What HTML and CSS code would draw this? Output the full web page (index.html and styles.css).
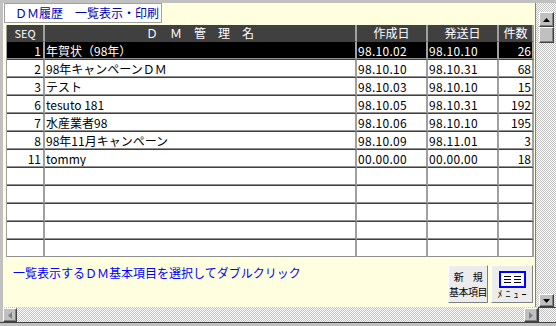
FILE: index.html
```html
<!DOCTYPE html>
<html lang="ja">
<head>
  <meta charset="UTF-8" />
  <title>DM履歴 一覧表示・印刷</title>
  <link rel="stylesheet" href="styles.css">
</head>

<body>
  <div class="ventana">
    <div class="arriba">
      <div class="principal">
        <div class="titulo">ＤＭ履歴　一覧表示・印刷</div>

        <table class="lista">
          <thead>
            <tr>
              <th class="seq">SEQ</th>
              <th class="nombre">Ｄ　Ｍ　管　理　名</th>
              <th class="fecha">作成日</th>
              <th class="fecha">発送日</th>
              <th class="num">件数</th>
            </tr>
          </thead>
          <tbody>
            <tr class="sel">
              <td class="seq">1</td><td>年賀状（98年）</td><td class="f">98.10.02</td><td class="f">98.10.10</td><td class="num">26</td>
            </tr>
            <tr>
              <td class="seq">2</td><td>98年キャンペーンＤＭ</td><td class="f">98.10.10</td><td class="f">98.10.31</td><td class="num">68</td>
            </tr>
            <tr>
              <td class="seq">3</td><td>テスト</td><td class="f">98.10.03</td><td class="f">98.10.10</td><td class="num">15</td>
            </tr>
            <tr>
              <td class="seq">6</td><td>tesuto 181</td><td class="f">98.10.05</td><td class="f">98.10.31</td><td class="num">192</td>
            </tr>
            <tr>
              <td class="seq">7</td><td>水産業者98</td><td class="f">98.10.06</td><td class="f">98.10.10</td><td class="num">195</td>
            </tr>
            <tr>
              <td class="seq">8</td><td>98年11月キャンペーン</td><td class="f">98.10.09</td><td class="f">98.11.01</td><td class="num">3</td>
            </tr>
            <tr>
              <td class="seq">11</td><td>tommy</td><td class="f">00.00.00</td><td class="f">00.00.00</td><td class="num">18</td>
            </tr>
            <!-- filas vacías -->
            <tr><td></td><td></td><td></td><td></td><td></td></tr>
            <tr><td></td><td></td><td></td><td></td><td></td></tr>
            <tr><td></td><td></td><td></td><td></td><td></td></tr>
            <tr><td></td><td></td><td></td><td></td><td></td></tr>
            <tr><td></td><td></td><td></td><td></td><td></td></tr>
          </tbody>
        </table>

        <div class="pie">
          <p class="aviso">一覧表示するＤＭ基本項目を選択してダブルクリック</p>
          <div class="botones">
            <button class="boton nuevo">新　規<br>基本項目</button>
            <button class="boton menu">
              <svg width="27" height="17" viewBox="0 0 27 17">
                <rect x="1" y="1" width="25" height="15" fill="#fff" stroke="#0000ff" stroke-width="2"/>
                <path d="M5 5.5h7M5 8.5h7M5 11.5h7M15 5.5h7M15 8.5h7M15 11.5h7" stroke="#000" stroke-width="1"/>
              </svg>
              <span>ﾒﾆｭｰ</span>
            </button>
          </div>
        </div>
      </div>

      <div class="vscroll">
        <div class="sbtn">
          <svg width="7" height="4" viewBox="0 0 7 4"><polygon points="3.5,0 7,4 0,4" fill="#000"/></svg>
        </div>
        <div class="sbtn thumb"></div>
        <div class="sbtn abajo">
          <svg width="7" height="4" viewBox="0 0 7 4"><polygon points="0,0 7,0 3.5,4" fill="#000"/></svg>
        </div>
      </div>
    </div>

    <div class="abajo-barra">
      <div class="hscroll">
        <div class="sbtn hbtn">
          <svg width="4" height="7" viewBox="0 0 4 7"><polygon points="4,0 4,7 0,3.5" fill="#808080"/></svg>
        </div>
        <div class="sbtn hbtn der">
          <svg width="4" height="7" viewBox="0 0 4 7"><polygon points="0,0 4,3.5 0,7" fill="#808080"/></svg>
        </div>
      </div>
      <div class="esquina"></div>
    </div>
  </div>
</body>
</html>
```

FILE: styles.css
```css
* {
  box-sizing: border-box;
}

body {
  margin: 0;
  width: 556px;
  height: 326px;
  overflow: hidden;
  background-color: #c0c0c0;
  font-family: "Noto Sans CJK JP", sans-serif;
  font-size: 12px;
}

.ventana {
  display: flex;
  flex-direction: column;
  height: 323px;
  padding: 3px 0 0 3px;
  border-bottom: 1px solid #404040;
}

.arriba {
  display: flex;
  height: 304px;
}

.principal {
  width: 532px;
  background-color: #ffffe0;
  padding: 0 2px 0 1px;
  display: flex;
  flex-direction: column;
}

.titulo {
  align-self: flex-start;
  width: 158px;
  height: 20px;
  background-color: #fff;
  border: 1px solid #a0a0a0;
  color: #0000b0;
  padding-left: 10px;
  line-height: 18px;
}

.lista {
  margin: 2px 0 0 2px;
  width: 528px;
  table-layout: fixed;
  border-spacing: 0;
  border-left: 1px solid #a0a0a0;
}

th, td {
  padding: 0 1px;
  white-space: nowrap;
  overflow: hidden;
  border-right: 2px solid #a0a0a0;
}

th {
  height: 16px;
  line-height: 16px;
  background-color: #404040;
  color: #fff;
  font-weight: normal;
  text-align: center;
}

th.seq { width: 38px; font-size: 11px; }
th.nombre { width: 312px; }
th.fecha { width: 71px; }
th.num { width: 35px; }

td {
  height: 18px;
  line-height: 15px;
  background-color: #fff;
  color: #000;
  border-top: 1px solid #404040;
  border-bottom: 1px solid #909090;
}

td.seq {
  text-align: right;
  padding-right: 2px;
}

td.f {
  letter-spacing: 0.3px;
}

td.num {
  text-align: right;
}

tr.sel td {
  background-color: #000;
  color: #fff;
}

.pie {
  display: flex;
  justify-content: space-between;
  align-items: flex-start;
  margin-top: 8px;
}

.aviso {
  margin: 0 0 0 9px;
  padding-top: 1px;
  color: #0000ff;
  line-height: 14px;
}

.botones {
  display: flex;
  gap: 3px;
}

.boton {
  height: 38px;
  padding: 0;
  background-color: #ececec;
  border: 1px solid;
  border-color: #fff #808080 #808080 #fff;
  font-family: inherit;
  font-size: 10px;
  line-height: 15px;
  color: #000;
  white-space: nowrap;
}

.nuevo {
  width: 40px;
  letter-spacing: -0.5px;
}

.menu {
  width: 42px;
  display: flex;
  flex-direction: column;
  align-items: center;
  justify-content: flex-start;
  padding-top: 5px;
}

.menu svg {
  display: block;
}

.menu span {
  line-height: 12px;
  letter-spacing: 3px;
  margin-left: 3px;
}

/* barras de desplazamiento */
.vscroll,
.hscroll,
.esquina {
  background: repeating-conic-gradient(#c0c0c0 0 25%, #fff 0 50%) 0 0 / 2px 2px;
}

.vscroll {
  width: 21px;
  display: flex;
  flex-direction: column;
  padding: 9px 0 0 3px;
  border-left: 1px solid #808080;
}

.sbtn {
  width: 15px;
  height: 15px;
  display: flex;
  align-items: center;
  justify-content: center;
  background-color: #c0c0c0;
  border: 1px solid;
  border-color: #fff #404040 #404040 #fff;
  box-shadow: inset -1px -1px #808080;
}

.thumb {
  height: 16px;
}

.abajo {
  margin-top: auto;
  height: 13px;
}

.abajo-barra {
  display: flex;
  height: 15px;
}

.hscroll {
  width: 535px;
  display: flex;
  padding-top: 1px;
}

.hbtn {
  width: 14px;
  height: 14px;
}

.der {
  margin-left: auto;
}

.esquina {
  flex: 1;
  border-left: 1px solid #404040;
  border-top: 1px solid #404040;
}
```
